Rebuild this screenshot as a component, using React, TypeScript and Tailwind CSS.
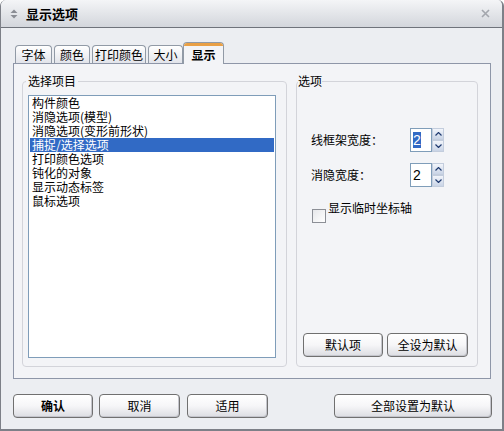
import React from "react";

const font = "font-['Noto_Sans_CJK_SC','Noto_Sans',sans-serif]";

const tabs = [
  { label: "字体", w: "w-[37px]" },
  { label: "颜色", w: "w-[36px]" },
  { label: "打印颜色", w: "w-[54px]" },
  { label: "大小", w: "w-[35px]" },
];

const items = [
  "构件颜色",
  "消隐选项(模型)",
  "消隐选项(变形前形状)",
  "捕捉/选择选项",
  "打印颜色选项",
  "钝化的对象",
  "显示动态标签",
  "鼠标选项",
];

const Button = ({ children, className = "" }: { children: React.ReactNode; className?: string }) => (
  <button
    className={`h-[24px] rounded-[4px] border border-[#707070] bg-gradient-to-b from-white via-[#f6f6f8] to-[#dcdde2] text-[12px] leading-none text-black shadow-[inset_-1px_-1px_0_#c4c5cc] ${className}`}
  >
    {children}
  </button>
);

const Spinner = ({ selected }: { selected?: boolean }) => (
  <div className="flex">
    <div className="flex h-[24px] w-[22px] items-center border border-[#7f9db9] bg-white pl-[2px]">
      <span
        className={`font-['Liberation_Sans',sans-serif] text-[14px] leading-[16px] ${
          selected ? "bg-[#316ac5] text-white" : "text-black"
        }`}
      >
        2
      </span>
    </div>
    <div className="flex w-[12px] flex-col">
      {[0, 1].map((i) => (
        <div
          key={i}
          className="flex h-[12px] items-center justify-center border border-[#c3cddd] bg-gradient-to-b from-[#f2f5fb] to-[#c9d4e6]"
        >
          <svg width="7" height="4" viewBox="0 0 7 4">
            <path
              d={i === 0 ? "M0.5 3.5 L3.5 0.5 L6.5 3.5" : "M0.5 0.5 L3.5 3.5 L6.5 0.5"}
              fill="none"
              stroke="#1f3a70"
              strokeWidth="1.2"
            />
          </svg>
        </div>
      ))}
    </div>
  </div>
);

export default function App() {
  return (
    <div
      className={`${font} flex h-[431px] w-[504px] flex-col overflow-hidden rounded-t-[6px] border-l border-r-2 border-b-2 border-[#7d8088] bg-[#eceef2] text-black`}
    >
      {/* title bar */}
      <div className="flex h-[28px] shrink-0 items-center border-b border-[#6f737b] bg-gradient-to-b from-[#f4f5f7] to-[#d3d6dc] pl-[9px] pr-[12px]">
        <svg width="8" height="10" viewBox="0 0 8 10" className="mr-[8px]">
          <path d="M4 0.5 L7.5 4 H0.5 Z" fill="#8a8d94" />
          <path d="M4 9.5 L7.5 6 H0.5 Z" fill="#8a8d94" />
        </svg>
        <span className="text-[13px] font-bold leading-none">显示选项</span>
        <svg width="9" height="9" viewBox="0 0 9 9" className="ml-auto">
          <path d="M1 1 L8 8 M8 1 L1 8" stroke="#a3a6ad" strokeWidth="1.6" />
        </svg>
      </div>

      <div className="flex flex-1 flex-col px-[12px] pt-[13px]">
        {/* tabs */}
        <div className="relative z-10 flex h-[22px] items-end pl-[2px]">
          {tabs.map((t) => (
            <div
              key={t.label}
              className={`${t.w} mr-[2px] flex h-[18px] items-center justify-center rounded-t-[4px] border border-b-0 border-[#919aa6] bg-gradient-to-b from-white to-[#e2e4ea] text-[12px] leading-none`}
            >
              {t.label}
            </div>
          ))}
          <div className="-ml-[2px] mb-[-1px] flex h-[22px] w-[41px] flex-col rounded-t-[4px] border border-b-0 border-[#919aa6] bg-[#f3f4f7]">
            <div className="h-[3px] rounded-t-[3px] bg-[#e9a046]" />
            <div className="flex flex-1 items-center justify-center text-[12px] font-bold leading-none">显示</div>
          </div>
        </div>

        {/* panel */}
        <div className="flex h-[316px] w-[478px] gap-[9px] border border-[#8e96a8] bg-[#f3f4f7] pb-[11px] pl-[8px] pr-[12px] pt-[10px]">
          <fieldset className="flex h-[293px] w-[265px] flex-col rounded-[4px] border border-[#d3d4da] pl-[3px] pr-[10px] pb-[8px]">
            <legend className="px-[2px] text-[12px] leading-[14px]">选择项目</legend>
            <div className="ml-[2px] mt-[7px] h-[263px] border border-[#7f9db9] bg-white px-px">
              {items.map((it, i) => (
                <div
                  key={it}
                  className={`h-[14px] pl-[2px] text-[12px] leading-[14px] ${
                    i === 3 ? "bg-[#316ac5] text-white" : "text-black"
                  }`}
                >
                  {it}
                </div>
              ))}
            </div>
          </fieldset>

          <fieldset className="flex h-[293px] w-[182px] flex-col rounded-[4px] border border-[#d3d4da] pb-[9px]">
            <legend className="ml-[1px] text-[12px] leading-[14px]">选项</legend>
            <div className="flex h-[270px] flex-col">
              <div className="mt-[40px] flex items-center pl-[14px]">
                <span className="w-[99px] text-[12px] leading-none">线框架宽度：</span>
                <Spinner selected />
              </div>
              <div className="mt-[11px] flex items-center pl-[14px]">
                <span className="w-[99px] text-[12px] leading-none">消隐宽度：</span>
                <Spinner />
              </div>
              <div className="mt-[14px] flex items-start pl-[15px]">
                <div className="mt-[8px] h-[14px] w-[14px] border border-[#8c8f96] bg-gradient-to-br from-[#e6e7ea] to-white" />
                <span className="ml-[2px] text-[12px] leading-[14px]">显示临时坐标轴</span>
              </div>
              <div className="mt-auto flex gap-[4px] pl-[6px]">
                <Button className="w-[80px]">默认项</Button>
                <Button className="w-[81px]">全设为默认</Button>
              </div>
            </div>
          </fieldset>
        </div>

        {/* bottom buttons */}
        <div className="mt-[15px] flex">
          <Button className="w-[80px] font-bold">确认</Button>
          <Button className="ml-[6px] w-[81px]">取消</Button>
          <Button className="ml-[7px] w-[81px]">适用</Button>
          <Button className="ml-auto mr-[-2px] w-[158px]">全部设置为默认</Button>
        </div>
      </div>
    </div>
  );
}
